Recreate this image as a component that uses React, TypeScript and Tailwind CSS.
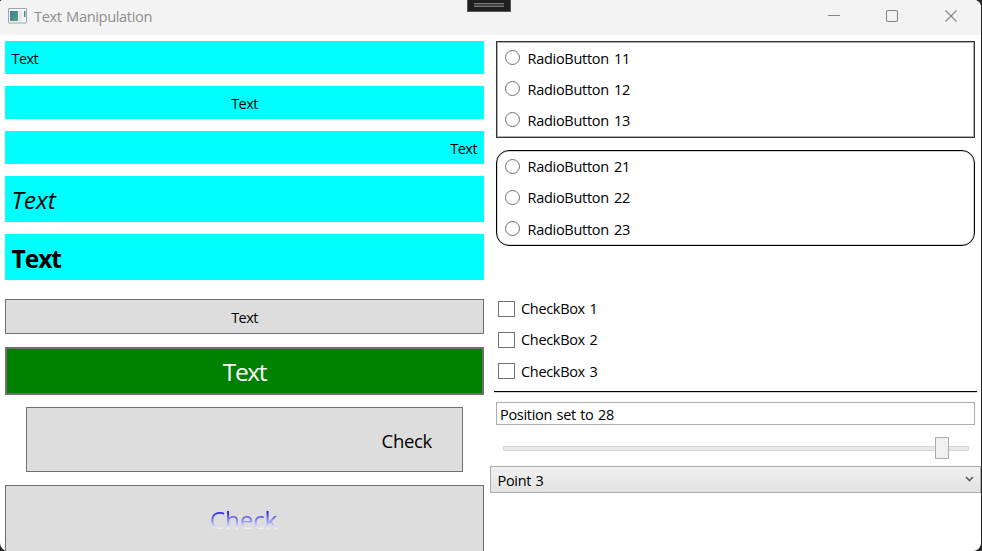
import React from "react";

function TextBar({ children, className }: { children: string; className: string }) {
  return <div className={`flex shrink-0 items-center bg-[#00ffff] px-[6px] ${className}`}><span>{children}</span></div>;
}

function Radio({ label, shift = "" }: { label: string; shift?: string }) {
  return (
    <div className="flex h-[31.2px] shrink-0 items-center gap-[7.500px]">
      <span className="h-[15px] w-[15px] rounded-full border border-[#707070] bg-white" />
      <span className={`tracking-[-0.28px] [word-spacing:1.6px] ${shift}`}>{label}</span>
    </div>
  );
}

function Check({ label, shift = "" }: { label: string; shift?: string }) {
  return (
    <div className="flex h-[31.2px] shrink-0 items-center gap-[6px]">
      <span className="h-[16px] w-[17px] border border-[#707070] bg-white" />
      <span className={`tracking-[-0.32px] [word-spacing:1.2px] ${shift}`}>{label}</span>
    </div>
  );
}

function TitleBar() {
  return (
    <header className="flex h-[35px] shrink-0 items-start bg-[#f3f3f3] pl-[8px] text-[#8f8f8f]">
      <svg className="mt-[8px]" width="19" height="16" viewBox="0 0 19 16">
        <defs>
          <linearGradient id="app" x1="0" y1="0" x2="1" y2="1">
            <stop offset="0" stopColor="#3d7897" />
            <stop offset="1" stopColor="#58a67c" />
          </linearGradient>
        </defs>
        <rect x=".5" y=".5" width="18" height="14.5" rx=".5" fill="#f3f5f7" stroke="#9ba5ae" />
        <rect x="2" y="3" width="8" height="10" fill="url(#app)" />
        <rect x="11" y="3" width="3" height="10" fill="#e5e8eb" />
        <rect x="16" y="3" width="1.5" height="6" fill="url(#app)" />
      </svg>
      <span className="ml-[7px] mt-[6px] text-[14.7px] leading-[20px] tracking-[-0.4px] [word-spacing:1px]">Text Manipulation</span>
      <div className="ml-auto flex pr-[23px] pt-[9px]">
        <svg width="130" height="14" viewBox="0 0 130 14" fill="none" stroke="#858585" strokeWidth="1.1">
          <path d="M0 6.5h12" />
          <rect x="58.5" y="1.5" width="11" height="11" rx="1.2" />
          <path d="M117.500 1.500l11 11M128.500 1.500l-11 11" />
        </svg>
      </div>
    </header>
  );
}

export default function App() {
  return (
    <div className="relative h-[551px] w-[982px] overflow-hidden bg-[#242424] pr-px font-['Open_Sans','Noto_Sans',sans-serif] text-[14.5px] leading-[20px] tracking-[-0.3px] text-black">
      <div className="flex h-[551px] flex-col overflow-hidden rounded-b-[8px] rounded-tr-[7px] rounded-tl-[3px] bg-white">
        <TitleBar />
        <main className="flex min-h-0 flex-1 overflow-hidden">
          <section className="flex w-[490px] shrink-0 flex-col pl-[5px] pr-[6px] pt-[6px] tracking-[-0.55px]">
            <TextBar className="h-[33px] pl-[6.500px] pt-[2px]">Text</TextBar>
            <TextBar className="mt-[12px] h-[33px] justify-center pt-[2px]">Text</TextBar>
            <TextBar className="mt-[12px] h-[33px] justify-end pr-[7px] pt-[2px]">Text</TextBar>
            <TextBar className="mt-[12px] h-[46px] pl-[6.500px] pt-[2px] text-[24.5px] italic tracking-[0px]">Text</TextBar>
            <TextBar className="mt-[12px] h-[46px] pl-[6.500px] pt-[4px] text-[24.5px] font-bold tracking-[-1px]">Text</TextBar>
            <div className="mt-[19px] flex h-[35px] shrink-0 items-center justify-center border border-[#707070] bg-[#dddddd] pt-[2px]">Text</div>
            <div className="mt-[13px] flex h-[48px] shrink-0 items-center justify-center border-2 border-[#707070] bg-[#008000] pt-[2px] text-[24.5px] tracking-[-1.3px] text-white">Text</div>
            <div className="ml-[21px] mr-[21px] mt-[12px] flex h-[65px] shrink-0 items-center justify-end border border-[#707070] bg-[#dddddd] pr-[30px] pt-[3px] text-[18.5px] tracking-[-0.3px]">Check</div>
            <div className="mt-[13px] flex h-[71px] shrink-0 items-center justify-center border border-[#707070] bg-[#dddddd] pr-[2px] text-[24.5px] tracking-[-0.3px]">
              <span className="-mt-[2px] bg-[linear-gradient(to_bottom,#0000e0_5%,#eeeeff_85%)] bg-clip-text py-[2px] text-transparent">Check</span>
            </div>
          </section>
          <section className="flex w-[491px] shrink-0 flex-col pt-[6px]">
            <div className="ml-[6px] mr-[6px] flex h-[97px] shrink-0 flex-col border border-[#333333] pl-[8px] shadow-[inset_0_0_0_1px_#b0b0b0]">
              <Radio label="RadioButton 11" shift="pt-[2px]" />
              <Radio label="RadioButton 12" shift="pt-[2px]" />
              <Radio label="RadioButton 13" shift="pt-[2px]" />
            </div>
            <div className="ml-[6px] mr-[6px] mt-[12px] flex h-[96px] shrink-0 flex-col rounded-[13px] border border-black pl-[8px] shadow-[inset_0_0_0_1px_#d4d4d4]">
              <Radio label="RadioButton 21" />
              <Radio label="RadioButton 22" />
              <Radio label="RadioButton 23" shift="pt-[2px]" />
            </div>
            <div className="mt-[47px] flex h-[98px] shrink-0 flex-col pl-[8px]">
              <Check label="CheckBox 1" />
              <Check label="CheckBox 2" shift="pt-px" />
              <Check label="CheckBox 3" shift="pt-[2px]" />
            </div>
            <div className="ml-[4px] mr-[4px] h-px shrink-0 bg-black shadow-[0_1px_0_#d4d4d4]" />
            <div className="ml-[6px] mr-[6px] mt-[10px] flex h-[23px] shrink-0 items-center border border-[#abadb3] pl-[3px] pt-[2px] tracking-[-0.29px] [word-spacing:0.9px]">Position set to 28</div>
            <div className="ml-[13px] mr-[12px] mt-[12px] flex h-[22px] shrink-0 items-center">
              <span className="h-[5px] w-[432px] border border-r-0 border-[#d6d6d6] bg-[#e7eaea]" />
              <span className="h-[22px] w-[14px] border border-[#acacac] bg-[#f0f0f0]" />
              <span className="h-[5px] flex-1 border border-l-0 border-[#d6d6d6] bg-[#e7eaea]" />
            </div>
            <div className="mt-[7px] flex h-[27px] shrink-0 items-center justify-between border border-[#acacac] bg-linear-to-b from-[#f0f0f0] to-[#e3e3e3] pl-[6.500px] pr-[6px]">
              <span className="pt-[2px] [word-spacing:0.9px]">Point 3</span>
              <svg width="9" height="7" viewBox="0 0 9 7" fill="none" stroke="#606060" strokeWidth="1.7"><path d="M1 1l3.500 3.500L8 1" /></svg>
            </div>
          </section>
        </main>
      </div>
      <div className="absolute left-[467px] top-0 h-[12px] w-[44px] border border-t-0 border-[#555555] bg-[#1f1f1f] px-[6px] pt-[3px]">
        <div className="h-[4px] border-y border-[#777777] bg-[#444444]" />
      </div>
    </div>
  );
}
